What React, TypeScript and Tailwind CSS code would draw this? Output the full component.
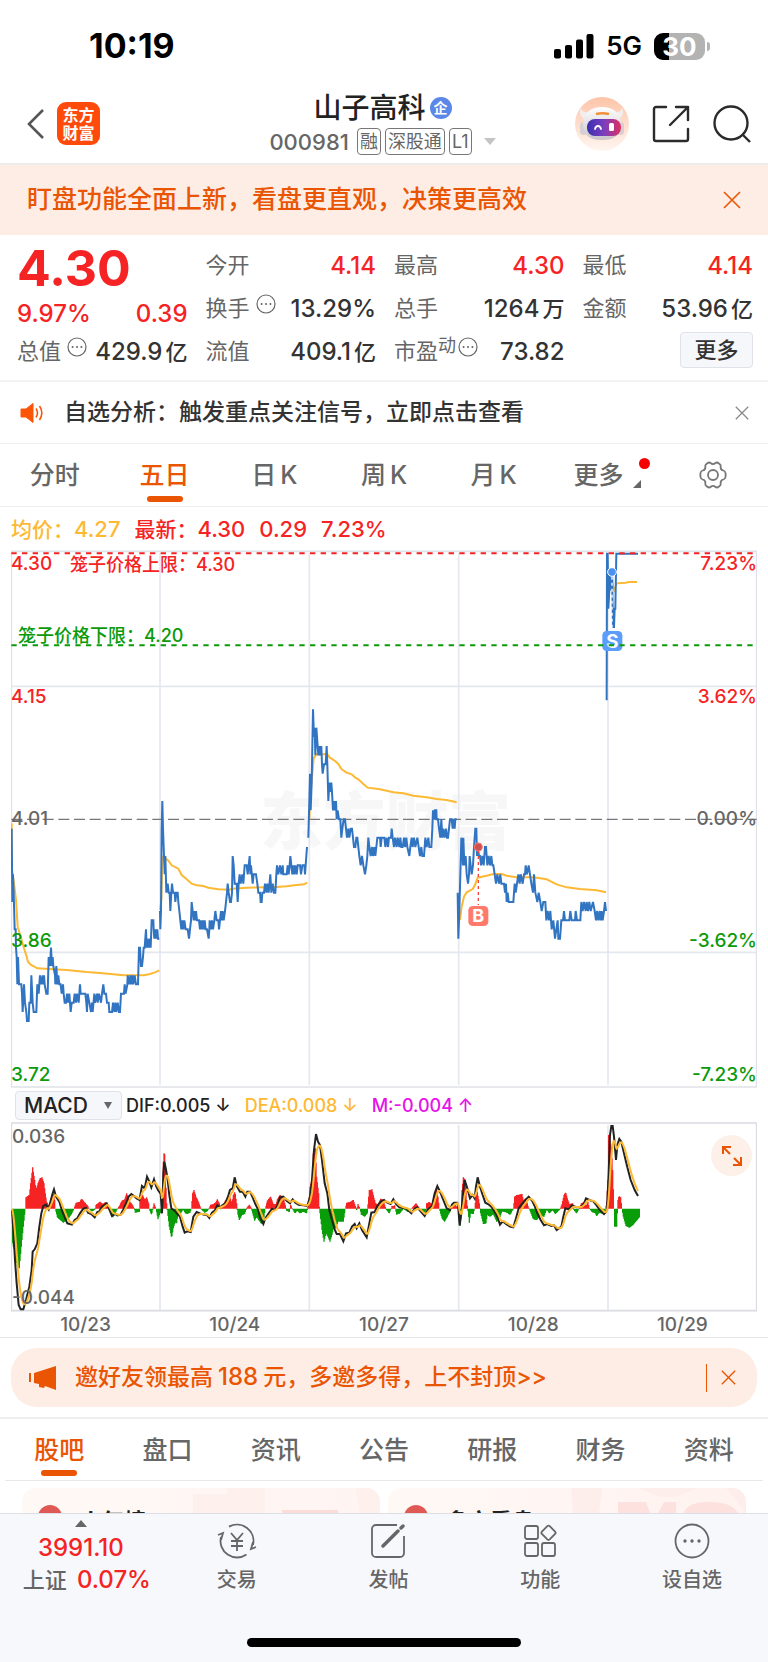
import type { ReactNode } from "react";

// intraday price moves, [x, cents away from the previous close]
const priceDays: [number, number][][] = [
  [[35, -1], [37, -9], [39, -6], [41, -8], [44, -12], [47, -12], [48, -14], [50, -15], [52, -18], [54, -15], [57, -18], [64, -18], [66, -19], [68, -21], [72, -18], [75, -20], [79, -21], [81, -22], [86, -22], [88, -20], [92, -20], [94, -17], [98, -20], [101, -21], [109, -21], [112, -18], [116, -19], [120, -17], [124, -18], [128, -17], [129, -18], [132, -17], [134, -18], [139, -19], [143, -19], [146, -15], [150, -16], [153, -14], [156, -16], [158, -15], [160, -16], [165, -17], [166, -18], [169, -16], [172, -18], [175, -17], [178, -18], [182, -18], [185, -19], [189, -18], [191, -19], [194, -20], [198, -20], [201, -19], [204, -20], [208, -19], [212, -21], [215, -20], [221, -20], [224, -19], [228, -20], [231, -19], [236, -20], [240, -18], [242, -19], [256, -19], [259, -20], [261, -21], [263, -19], [268, -20], [273, -21], [276, -20], [278, -21], [283, -19], [285, -20], [291, -19], [293, -20], [297, -19], [303, -20], [306, -19], [310, -18], [313, -19], [318, -19], [321, -20], [326, -20], [328, -21], [336, -21], [339, -20], [343, -21], [346, -20], [349, -21], [353, -20], [357, -21], [360, -21], [363, -19], [372, -19], [374, -18], [377, -19], [382, -18], [383, -17], [388, -18], [391, -17], [394, -18], [397, -17], [400, -18], [404, -17], [408, -18], [414, -18], [417, -14], [420, -14], [423, -16], [426, -16], [429, -15], [431, -14], [434, -14], [438, -12], [440, -14], [443, -13], [446, -14], [450, -13], [452, -14], [455, -11], [460, -11], [461, -12], [463, -13], [466, -12], [468, -13], [472, -12], [474, -13], [478, -13]],
  [[480, -10], [481, -12], [483, -10], [485, -1], [487, 2], [489, -1], [491, -3], [494, -6], [496, -4], [499, -8], [503, -7], [506, -8], [509, -8], [511, -10], [514, -8], [516, -7], [519, -8], [524, -8], [526, -9], [529, -8], [533, -8], [535, -9], [538, -10], [541, -11], [544, -12], [547, -11], [550, -12], [553, -11], [557, -12], [563, -12], [567, -13], [570, -12], [573, -11], [575, -9], [578, -10], [581, -11], [583, -10], [586, -11], [588, -10], [591, -11], [597, -11], [600, -12], [602, -11], [605, -12], [608, -11], [611, -12], [614, -11], [617, -12], [621, -12], [626, -13], [628, -12], [629, -11], [633, -12], [636, -11], [639, -12], [643, -11], [646, -10], [650, -11], [655, -11], [657, -12], [660, -11], [663, -10], [666, -11], [668, -10], [671, -11], [675, -10], [678, -9], [681, -8], [683, -7], [686, -8], [690, -9], [693, -9], [696, -8], [698, -4], [701, -5], [704, -7], [710, -7], [713, -9], [716, -7], [719, -6], [722, -7], [727, -6], [730, -7], [734, -5], [740, -5], [743, -6], [746, -5], [749, -4], [751, -6], [753, -5], [758, -7], [761, -6], [768, -6], [772, -7], [775, -8], [780, -8], [782, -9], [785, -9], [787, -8], [792, -8], [795, -7], [799, -8], [802, -7], [806, -8], [811, -6], [814, -8], [818, -7], [822, -8], [826, -8], [829, -6], [831, -5], [835, -6], [840, -5], [844, -6], [848, -5], [850, -6], [860, -6], [863, -5], [866, -6], [869, -5], [871, -4], [874, -5], [877, -6], [880, -5], [883, -6], [886, -5], [890, -6], [893, -5], [900, -5], [903, -6], [907, -5], [913, -5], [915, -6], [919, -4], [921, -3]],
  [[925, -2], [928, 2], [930, 5], [932, 1], [935, 4], [937, 8], [939, 12], [942, 9], [944, 10], [946, 7], [949, 10], [953, 8], [955, 7], [958, 8], [961, 7], [964, 8], [966, 6], [968, 5], [972, 6], [977, 6], [980, 8], [982, 6], [985, 2], [988, 4], [991, 3], [994, 4], [996, 3], [999, 1], [1002, 2], [1005, 1], [1008, 2], [1010, 0], [1013, 1], [1017, 0], [1021, 0], [1024, -2], [1027, -1], [1031, 0], [1035, 0], [1038, -1], [1041, -2], [1045, -1], [1048, -2], [1052, -1], [1056, -1], [1059, -2], [1062, -3], [1066, -3], [1069, -2], [1072, -2], [1075, -3], [1078, -4], [1082, -5], [1086, -4], [1090, -5], [1095, -6], [1099, -5], [1102, -4], [1105, -2], [1108, -3], [1112, -4], [1116, -3], [1119, -4], [1123, -3], [1126, -4], [1129, -3], [1132, -2], [1140, -2], [1142, -3], [1145, -2], [1153, -2], [1156, -3], [1160, -2], [1164, -3], [1167, -2], [1173, -2], [1175, -1], [1178, -2], [1182, -3], [1185, -2], [1190, -3], [1193, -2], [1198, -3], [1201, -2], [1204, -3], [1208, -3], [1212, -2], [1215, -3], [1219, -2], [1222, -3], [1228, -4], [1231, -3], [1235, -2], [1238, -3], [1242, -2], [1246, -3], [1252, -2], [1256, -3], [1260, -4], [1264, -3], [1267, -4], [1272, -4], [1276, -2], [1280, -3], [1285, -2], [1288, -3], [1294, -3], [1297, -1], [1299, 1], [1304, 0], [1305, 1], [1309, 1], [1310, 0], [1314, 0], [1317, -1], [1321, -2], [1324, 0], [1327, -2], [1330, -1], [1334, -2], [1338, -1], [1341, -2], [1344, -2], [1347, -1], [1350, 0], [1355, 0], [1358, -1], [1361, 0], [1364, -1], [1366, 0], [1370, 0]],
  [[1373, -8], [1375, -13], [1378, -10], [1381, -6], [1384, -2], [1389, -5], [1390, -2], [1392, -4], [1395, -5], [1397, -4], [1400, -6], [1404, -7], [1407, -6], [1409, -4], [1412, -5], [1415, -6], [1419, -5], [1422, -3], [1426, -1], [1429, -1], [1431, -4], [1433, -3], [1437, -4], [1440, -4], [1443, -5], [1447, -4], [1451, -5], [1455, -3], [1458, -3], [1462, -5], [1466, -4], [1470, -5], [1474, -4], [1477, -5], [1480, -5], [1484, -6], [1488, -7], [1492, -6], [1497, -7], [1501, -6], [1504, -7], [1512, -7], [1515, -8], [1518, -7], [1520, -9], [1523, -8], [1526, -9], [1540, -9], [1544, -7], [1547, -8], [1551, -7], [1555, -6], [1559, -7], [1562, -6], [1568, -7], [1572, -6], [1575, -6], [1577, -5], [1581, -6], [1586, -5], [1590, -6], [1594, -7], [1599, -8], [1602, -6], [1606, -8], [1612, -9], [1616, -8], [1621, -9], [1625, -10], [1630, -9], [1636, -9], [1639, -11], [1643, -10], [1647, -11], [1651, -10], [1655, -12], [1660, -11], [1665, -13], [1669, -12], [1673, -11], [1675, -13], [1680, -13], [1684, -11], [1689, -11], [1692, -10], [1695, -11], [1708, -11], [1711, -10], [1715, -11], [1725, -11], [1727, -10], [1731, -11], [1741, -11], [1744, -9], [1748, -10], [1752, -9], [1757, -10], [1760, -9], [1764, -10], [1768, -9], [1772, -10], [1779, -9], [1784, -10], [1788, -11], [1791, -10], [1795, -11], [1799, -10], [1802, -11], [1805, -10], [1808, -11], [1812, -10], [1815, -9], [1818, -10]],
  [[1820, 13], [1821, 29], [1823, 29], [1825, 23], [1828, 25], [1830, 27], [1833, 25], [1836, 27], [1839, 21], [1842, 21], [1844, 23], [1846, 23], [1849, 29], [1914, 29]],
];

const averageDays = [
  "35,820 36,960 42,1000 48,1050 53,1130 62,1160 72,1195 80,1220 84,1235 92,1244 112,1255 160,1258 200,1260 260,1266 300,1269 340,1273 370,1276 432,1276 450,1272 465,1267 478,1261",
  "480,1080 484,1050 487,920 495,923 505,932 515,946 535,956 545,975 560,988 575,1001 590,1006 610,1008 625,1013 655,1018 685,1019 700,1016 740,1013 830,1011 860,1009 890,1005 912,1003 922,998",
  "928,808 932,720 937,670 941,625 950,612 982,613 990,623 1005,633 1015,642 1025,658 1040,668 1055,673 1065,682 1075,688 1090,702 1103,713 1140,718 1180,727 1210,730 1240,737 1280,742 1310,747 1340,750 1370,757",
  "1380,1110 1385,1070 1392,1040 1400,1027 1418,1017 1425,1005 1433,983 1460,977 1480,972 1505,972 1520,977 1550,982 1600,982 1640,988 1670,1003 1700,1012 1740,1017 1790,1021 1818,1027",
  "1836,80 1839,110 1844,120 1850,100 1877,98 1887,96 1911,96",
];

const histogram =
  "36,386 38,490 45,520 52,560 58,565 64,500 70,440 75,395 76,386 78,352 88,345 92,310 98,262 104,300 108,330 114,310 120,295 126,292 132,310 136,340 140,365 150,384 152,370 158,340 163,345 166,386 172,412 190,428 200,420 206,415 216,400 222,386 228,368 240,365 245,356 252,365 262,376 268,386 275,395 285,388 288,375 300,365 308,372 316,366 324,378 328,390 338,412 345,400 352,388 358,378 366,362 374,358 380,340 388,362 398,376 403,386 406,398 418,396 420,360 424,352 428,345 434,360 440,352 446,370 448,388 455,405 462,370 468,386 474,418 480,400 484,400 488,386 489,260 492,220 495,225 497,300 500,370 503,400 508,440 515,475 520,445 526,425 530,430 534,402 542,400 550,388 556,400 563,402 570,398 574,386 578,340 582,330 588,350 594,362 600,378 604,388 614,398 620,395 626,388 632,374 640,372 648,366 652,358 658,370 662,388 668,380 674,365 684,350 690,352 696,370 700,345 705,335 710,370 713,400 718,420 726,405 734,402 740,384 748,374 754,384 758,400 764,422 770,410 776,420 785,432 790,425 796,386 802,362 812,350 820,372 828,372 832,358 840,345 850,352 856,376 860,392 868,396 872,374 877,386 885,400 892,392 900,400 910,395 920,400 924,380 928,350 930,320 936,300 940,220 946,205 950,290 956,340 958,380 960,400 966,450 972,485 978,460 984,470 990,485 996,465 1002,440 1008,445 1014,425 1030,425 1034,400 1036,386 1040,368 1050,366 1060,360 1066,378 1070,390 1074,372 1080,386 1084,404 1094,410 1102,400 1105,360 1108,330 1116,328 1120,345 1126,368 1134,375 1142,356 1150,360 1158,388 1168,400 1176,378 1184,376 1190,404 1200,400 1210,386 1224,396 1236,384 1248,370 1258,384 1270,402 1278,392 1280,370 1288,366 1298,374 1304,340 1310,325 1314,350 1318,386 1326,415 1334,425 1342,410 1350,395 1354,380 1362,372 1370,380 1376,386 1379,448 1384,400 1386,330 1390,292 1396,300 1400,360 1403,386 1408,428 1412,400 1420,402 1424,386 1428,350 1432,335 1438,370 1442,400 1450,432 1458,430 1462,405 1470,410 1480,402 1490,425 1500,412 1506,394 1520,398 1530,404 1540,388 1544,350 1550,345 1566,342 1570,360 1578,355 1584,378 1590,392 1600,418 1610,420 1620,408 1632,410 1640,388 1648,400 1658,390 1666,402 1680,388 1686,372 1692,345 1697,336 1702,355 1708,372 1718,370 1722,390 1730,400 1736,388 1744,370 1752,366 1758,378 1764,366 1768,384 1776,396 1786,400 1790,408 1798,398 1808,402 1816,388 1820,365 1824,300 1826,165 1834,200 1838,270 1842,386 1844,440 1850,440 1852,400 1854,360 1857,348 1862,352 1866,386 1870,410 1878,438 1888,443 1898,436 1908,424 1918,412";

const dif =
  "36,390 40,450 45,540 50,610 56,675 62,688 70,688 78,660 88,620 95,570 98,515 104,508 112,490 118,440 124,400 130,378 138,374 146,388 152,362 158,340 162,328 168,350 178,365 186,392 194,412 202,430 216,434 224,420 232,415 240,400 250,386 258,384 264,398 274,402 284,412 292,396 298,394 304,382 312,376 320,370 328,388 336,408 346,402 352,406 362,404 370,388 378,370 386,350 394,342 402,348 410,355 418,360 422,340 426,318 434,325 441,290 448,305 454,322 462,298 468,318 474,330 482,342 486,400 488,350 490,280 493,245 498,268 503,300 508,345 514,385 524,392 532,402 540,410 548,440 554,458 562,454 572,456 580,410 590,396 600,400 612,404 620,404 628,414 636,398 644,392 652,376 660,382 668,375 676,370 684,350 690,330 698,325 704,292 710,318 720,335 728,335 736,350 742,335 750,335 758,352 766,372 774,388 780,412 790,432 796,415 806,400 816,386 824,390 832,378 840,352 850,350 860,362 870,370 878,358 886,368 896,374 910,376 922,378 930,350 936,300 942,210 948,162 954,185 960,195 966,240 974,310 982,340 988,390 996,420 1004,448 1010,462 1020,462 1030,484 1038,460 1048,458 1056,440 1064,432 1070,445 1078,430 1086,450 1100,472 1108,430 1114,398 1124,396 1132,378 1142,365 1152,360 1162,368 1172,372 1180,358 1188,372 1198,382 1208,384 1218,385 1234,400 1244,386 1252,382 1260,392 1274,408 1284,388 1296,378 1304,340 1312,318 1320,335 1330,360 1340,385 1350,390 1356,374 1362,368 1372,368 1375,386 1379,436 1384,400 1388,350 1394,300 1402,325 1410,355 1418,345 1424,355 1428,320 1433,292 1440,320 1448,345 1456,368 1464,372 1474,380 1484,395 1492,410 1500,434 1508,424 1518,432 1530,440 1540,442 1548,415 1556,385 1566,372 1578,358 1586,350 1596,362 1604,378 1612,400 1622,420 1632,436 1642,432 1654,438 1662,436 1670,450 1684,440 1690,410 1696,385 1706,388 1716,376 1730,382 1744,380 1752,370 1758,355 1768,360 1780,364 1788,374 1800,390 1812,402 1818,396 1821,386 1826,280 1830,165 1834,138 1838,138 1842,170 1848,240 1852,195 1858,177 1864,185 1872,220 1882,262 1892,300 1904,330 1914,348";

const ZERO = 386;

function resample(source: string, step: number) {
  const pts = source.split(" ").map((p) => p.split(",").map(Number));
  const out: [number, number][] = [];
  let i = 0;
  for (let x = pts[0][0]; x <= pts[pts.length - 1][0]; x += step) {
    while (i < pts.length - 2 && pts[i + 1][0] < x) i++;
    const [x0, y0] = pts[i];
    const [x1, y1] = pts[i + 1];
    out.push([x, y0 + ((y1 - y0) * (x - x0)) / (x1 - x0)]);
  }
  return out;
}

const bars = resample(histogram, 2);
const barPath = (rows: [number, number][]) =>
  rows.map(([x, y]) => `M${x} ${ZERO}V${y.toFixed(0)}`).join("");
const redBars = barPath(bars.filter(([, y]) => y < ZERO));
const greenBars = barPath(bars.filter(([, y]) => y > ZERO));

// signal line trails the fast line
let signal = ZERO;
const dea = resample(dif, 2)
  .map(([x, y]) => {
    signal += (y - signal) * 0.22;
    return `${x},${signal.toFixed(0)}`;
  })
  .join(" ");

const priceLine = (day: [number, number][]) =>
  day.map(([x, c]) => `${x},${(808 - c * 27.5).toFixed(0)}`).join(" ");

function Close({ className }: { className: string }) {
  return (
    <svg viewBox="0 0 18 18" className={className} fill="none" stroke="currentColor" strokeWidth="1.6">
      <path d="M1 1l16 16M17 1L1 17" />
    </svg>
  );
}

function Dots({ className }: { className: string }) {
  return (
    <svg viewBox="0 0 20 20" className={className} fill="none" stroke="currentColor">
      <circle cx="10" cy="10" r="9" strokeWidth="1.2" />
      <path d="M5.6 10h.01M10 10h.01M14.4 10h.01" strokeWidth="2" strokeLinecap="round" />
    </svg>
  );
}

function Robot() {
  return (
    <svg viewBox="0 0 54 54" className="size-[54px]">
      <defs>
        <linearGradient id="halo" x1="0" y1="0" x2="0" y2="1">
          <stop offset="0" stopColor="#fdc4a8" />
          <stop offset="1" stopColor="#fff6f1" />
        </linearGradient>
        <linearGradient id="visor" x1="0" y1="0" x2="1" y2="0">
          <stop offset="0" stopColor="#3a2fae" />
          <stop offset="0.5" stopColor="#7a3fc0" />
          <stop offset="1" stopColor="#e0305c" />
        </linearGradient>
        <linearGradient id="shell" x1="0" y1="0" x2="0" y2="1">
          <stop offset="0" stopColor="#ffffff" />
          <stop offset="1" stopColor="#c9c4c8" />
        </linearGradient>
      </defs>
      <circle cx="27" cy="27" r="27" fill="url(#halo)" />
      <path d="M6 11c1 4 4 5 8 4l-5 7c-4-3-5-7-3-11zM47 11c-1 4-4 5-8 4l5 7c4-3 5-7 3-11z" fill="#f3eeee" />
      <rect x="5" y="25" width="7" height="13" rx="3.5" fill="#d6d0d4" />
      <rect x="42" y="25" width="7" height="13" rx="3.5" fill="#d6d0d4" />
      <path d="M8 27c0-11 8-17 19-17s19 6 19 17c0 10-5 16-19 16S8 37 8 27z" fill="url(#shell)" />
      <path d="M21 17c4-1 9-1 13 0" stroke="#f0903a" strokeWidth="2.4" fill="none" />
      <rect x="12" y="22" width="34" height="17" rx="8" fill="url(#visor)" />
      <path d="M20 32c1-4 5-4 6 0" stroke="#fff" strokeWidth="1.8" fill="none" strokeLinecap="round" />
      <rect x="34" y="26" width="5" height="8" rx="1.5" fill="#fff" />
    </svg>
  );
}

function Stat({
  label,
  value,
  unit,
  red,
  more,
  sup,
}: {
  label: string;
  value: string;
  unit?: string;
  red?: boolean;
  more?: boolean;
  sup?: string;
}) {
  return (
    <div className="flex h-[43px] items-center justify-between whitespace-nowrap">
      <dt className="flex items-center text-[22px] text-[#666]">
        {label}
        {sup && <span className="mb-3 text-lg leading-none">{sup}</span>}
        {more && <Dots className={sup ? "mb-[10px] ml-[2px] size-5" : "mb-[10px] ml-[6px] size-5"} />}
      </dt>
      <dd className={red ? "text-2xl font-medium text-[#f52323]" : "text-2xl font-medium text-[#333]"}>
        {value}
        {unit && <span className="ml-[3px] text-[22px]">{unit}</span>}
      </dd>
    </div>
  );
}

const chartTabs = [
  { name: "分时" },
  { name: "五日" },
  { name: "日", suffix: "K" },
  { name: "周", suffix: "K" },
  { name: "月", suffix: "K" },
];
const infoTabs = ["股吧", "盘口", "资讯", "公告", "研报", "财务", "资料"];

function Tab({ name, suffix, active }: { name: string; suffix?: string; active: boolean }) {
  return (
    <button
      className={
        active
          ? "relative flex items-center justify-center pt-[2px] text-[25px] font-medium text-[#ea5504]"
          : "relative flex items-center justify-center pt-[2px] text-[25px] font-medium text-[#666]"
      }
    >
      {name}
      {suffix && <span className="ml-1">{suffix}</span>}
      {active && <span className="absolute bottom-1 h-[6px] w-9 rounded-full bg-[#ea5504]" />}
    </button>
  );
}

function PriceChart() {
  return (
    <div className="relative mx-[11px] h-[538px] text-[19px] leading-5 font-medium">
      <svg viewBox="33 0 2238 1614" preserveAspectRatio="none" className="block size-full">
        <text x="1157" y="882" textAnchor="middle" fontSize="188" fontWeight="900" fill="#f7f7f8">
          东方财富
        </text>
        <g fill="none" stroke="#e4e7ef" strokeWidth="5">
          <path d="M34 4H2270V1611H34z" stroke="#dfe2e8" />
          <path d="M480 10V1604M928 10V1604M1376 10V1604M1824 10V1604M34 409H2270M34 1207H2270" />
        </g>
        <path d="M34 808H2270" stroke="#777" strokeWidth="4" strokeDasharray="33 14" />
        {averageDays.map((d) => (
          <polyline key={d} points={d} fill="none" stroke="#fdb933" strokeWidth="6" />
        ))}
        {priceDays.map((d, i) => (
          <polyline key={i} points={priceLine(d)} fill="none" stroke="#3174c2" strokeWidth="6" />
        ))}
        <path d="M34 10H2270" stroke="#f52323" strokeWidth="6" strokeDasharray="16 16" />
        <path d="M1435 900V1065" stroke="#f5433c" strokeWidth="4" strokeDasharray="9 9" />
        <circle cx="1435" cy="891" r="12" fill="#cf5050" stroke="#ff7466" strokeWidth="3" />
        <rect x="1405" y="1068" width="60" height="60" rx="13" fill="#ff7a6c" />
        <text x="1435" y="1117" textAnchor="middle" fontSize="54" fontWeight="700" fill="#fff">
          B
        </text>
        <path d="M1836 80V245" stroke="#fff" strokeWidth="4" strokeDasharray="9 9" />
        <circle cx="1836" cy="66" r="13" fill="#4d92f0" stroke="#fff" strokeWidth="3" />
        <rect x="1807" y="243" width="60" height="60" rx="13" fill="#5a9dfb" />
        <text x="1837" y="293" textAnchor="middle" fontSize="56" fontWeight="700" fill="#fff">
          S
        </text>
        <path d="M34 286H2270" stroke="#0b9a0b" strokeWidth="6" strokeDasharray="16 16" />
      </svg>
      <span className="absolute top-1 left-0 text-[#f52323]">4.30</span>
      <span className="absolute top-[5px] left-[59px] text-lg leading-5 text-[#f52323]">笼子价格上限：4.30</span>
      <span className="absolute top-[76px] left-[7px] text-lg leading-5 text-[#0b9a0b]">笼子价格下限：4.20</span>
      <span className="absolute top-[137px] left-0 text-[#f52323]">4.15</span>
      <span className="absolute top-[259px] left-0 text-[#666]">4.01</span>
      <span className="absolute top-[381px] left-0 text-[#0b9a0b]">3.86</span>
      <span className="absolute top-[515px] left-0 text-[#0b9a0b]">3.72</span>
      <span className="absolute top-1 right-0 text-[#f52323]">7.23%</span>
      <span className="absolute top-[137px] right-0 text-[#f52323]">3.62%</span>
      <span className="absolute top-[259px] right-0 text-[#666]">0.00%</span>
      <span className="absolute top-[381px] right-0 text-[#0b9a0b]">-3.62%</span>
      <span className="absolute top-[515px] right-0 text-[#0b9a0b]">-7.23%</span>
    </div>
  );
}

function MacdChart() {
  return (
    <div className="relative mx-[11px] h-[190px] text-[19px] leading-5 font-medium text-[#666]">
      <svg viewBox="33 126 2238 570" preserveAspectRatio="none" className="block size-full" fill="none">
        <path d="M34 129H2270V692H34z" stroke="#dadce2" strokeWidth="5" />
        <path d="M480 135V690M928 135V690M1376 135V690M1824 135V690" stroke="#e4e7ef" strokeWidth="5" />
        <path d={redBars} stroke="#f52323" strokeWidth="4" />
        <path d={greenBars} stroke="#0a9d0a" strokeWidth="4" />
        <polyline points={dif} stroke="#222" strokeWidth="6" />
        <polyline points={dea} stroke="#fdb933" strokeWidth="6" />
      </svg>
      <span className="absolute top-[5px] left-px">0.036</span>
      <span className="absolute bottom-1 left-px">-0.044</span>
      <button aria-label="全屏" className="absolute top-[13px] right-[5px] flex size-[41px] items-center justify-center rounded-full bg-[#fdf0e9] text-[#ea5504]">
        <svg viewBox="0 0 22 22" className="size-[22px]" fill="none" stroke="currentColor" strokeWidth="2">
          <path d="M2 9V2h8M2 2l7 7M20 12v8h-8M20 20l-7-7" />
        </svg>
      </button>
    </div>
  );
}

function NavItem({ name, children }: { name: string; children: ReactNode }) {
  return (
    <a href="#" className="flex flex-col items-center text-xl font-medium text-[#666]">
      <svg viewBox="0 0 40 36" className="mt-[9px] h-9 w-10" fill="none" stroke="currentColor" strokeWidth="1.8">
        {children}
      </svg>
      <span className="mt-[7px] leading-7">{name}</span>
    </a>
  );
}

export default function App() {
  return (
    <div className="w-full overflow-hidden bg-white font-['Inter','Noto_Sans_CJK_SC',sans-serif] text-[#333]">
      <div className="flex h-[92px] items-center justify-between pr-[58px] pl-[89px] text-black">
        <span className="text-[34px] leading-10 font-bold">10:19</span>
        <div className="flex items-center">
          <svg viewBox="0 0 40 25" className="h-[25px] w-10">
            <rect x="0" y="15" width="7" height="9.5" rx="2" />
            <rect x="11" y="11" width="7" height="13.5" rx="2" />
            <rect x="22" y="5.5" width="7" height="19" rx="2" />
            <rect x="32.5" y="0" width="7" height="24.5" rx="2" />
          </svg>
          <span className="ml-3 text-[26px] leading-8 font-semibold">5G</span>
          <div className="ml-3 flex h-[27px] w-[51px] items-center justify-center rounded-[9px] bg-[linear-gradient(to_right,#000_15px,#b3b3b3_15px)] text-[26px] leading-[27px] font-bold text-white">
            30
          </div>
          <span className="ml-[2px] h-[9px] w-[3px] rounded-r-full bg-[#b3b3b3]" />
        </div>
      </div>

      <header className="grid h-[73px] grid-cols-3 items-center border-b-2 border-[#ececec] pr-[17px] pb-2 pl-[26px]">
        <div className="flex items-center gap-[13px]">
          <button aria-label="返回">
            <svg viewBox="0 0 18 30" className="h-[30px] w-[18px]" fill="none" stroke="#555" strokeWidth="2.6">
              <path d="M17 1L3 15l14 14" />
            </svg>
          </button>
          <a href="#" className="flex size-[43px] flex-col items-center justify-center rounded-[9px] bg-[#fe4a0a] text-base leading-[18px] font-bold text-white">
            <span>东方</span>
            <span>财富</span>
          </a>
        </div>
        <div className="flex flex-col items-center gap-1 pr-3 whitespace-nowrap">
          <h1 className="flex items-center gap-1 text-[28px] leading-8 font-medium text-[#222]">
            山子高科
            <span className="flex size-[22px] items-center justify-center rounded-full bg-[#5b87e8] text-sm leading-none font-bold text-white">
              企
            </span>
          </h1>
          <div className="flex items-center gap-1 text-lg leading-none text-[#666]">
            <span className="mr-1 text-[22px] font-medium">000981</span>
            <span className="flex h-[27px] items-center rounded border border-[#777] px-[2px]">融</span>
            <span className="flex h-[27px] items-center rounded border border-[#777] px-[2px]">深股通</span>
            <span className="flex h-[27px] items-center rounded border border-[#777] px-[2px]">L1</span>
            <svg viewBox="0 0 12 7" className="ml-2 h-[7px] w-3" fill="#c4c4c4">
              <path d="M0 0h12L6 7z" />
            </svg>
          </div>
        </div>
        <div className="flex items-center justify-end gap-[23px] text-[#2b2b2b]">
          <button aria-label="智能助手">
            <Robot />
          </button>
          <button aria-label="分享">
            <svg viewBox="0 0 38 38" className="size-[38px]" fill="none" stroke="currentColor" strokeWidth="2.4" strokeLinecap="round" strokeLinejoin="round">
              <path d="M14 2H4a2 2 0 0 0-2 2v30a2 2 0 0 0 2 2h30a2 2 0 0 0 2-2V24" />
              <path d="M24 2h12v13M36 2L18 20" />
            </svg>
          </button>
          <button aria-label="搜索">
            <svg viewBox="0 0 38 38" className="size-[38px]" fill="none" stroke="currentColor" strokeWidth="2.4">
              <circle cx="18" cy="18" r="16.5" />
              <path d="M29.5 29.5L37 37" />
            </svg>
          </button>
        </div>
      </header>

      <div className="flex h-[70px] items-center justify-between bg-[#fdede4] pr-[27px] pl-[27px] text-[25px] font-medium text-[#ea5504]">
        <p>盯盘功能全面上新，看盘更直观，决策更高效</p>
        <button aria-label="关闭">
          <Close className="size-[18px]" />
        </button>
      </div>

      <dl className="grid h-[147px] grid-cols-4 gap-x-[18px] border-b-2 border-[#f3f3f3] pt-[9px] pr-[15px] pl-[17px]">
        <div>
          <div className="h-[86px] text-[#f52323]">
            <p className="text-[50px] leading-[48px] font-bold">4.30</p>
            <div className="flex justify-between text-2xl leading-11 font-medium">
              <span>9.97%</span>
              <span>0.39</span>
            </div>
          </div>
          <Stat label="总值" value="429.9" unit="亿" more />
        </div>
        <div>
          <Stat label="今开" value="4.14" red />
          <Stat label="换手" value="13.29%" more />
          <Stat label="流值" value="409.1" unit="亿" />
        </div>
        <div>
          <Stat label="最高" value="4.30" red />
          <Stat label="总手" value="1264" unit="万" />
          <Stat label="市盈" value="73.82" sup="动" more />
        </div>
        <div>
          <Stat label="最低" value="4.14" red />
          <Stat label="金额" value="53.96" unit="亿" />
          <div className="flex h-[43px] items-center justify-end pb-1">
            <button className="h-9 w-[73px] rounded border border-[#dfe2e8] bg-[#f6f7fa] text-[22px] leading-none font-medium">
              更多
            </button>
          </div>
        </div>
      </dl>

      <div className="flex h-[62px] items-center border-b border-[#eee] pr-[19px] pl-5 text-[23px] font-medium">
        <svg viewBox="0 0 24 20" className="h-5 w-6 text-[#fb5607]">
          <path d="M1 6h5l7-5.500v19L6 14H1z" fill="currentColor" stroke="currentColor" strokeLinejoin="round" />
          <path d="M16 5.500c2 3 2 6 0 9M19.500 3c3 4.500 3 9.500 0 14" fill="none" stroke="currentColor" strokeWidth="1.6" />
        </svg>
        <p className="ml-5 flex-1">自选分析：触发重点关注信号，立即点击查看</p>
        <button aria-label="关闭" className="text-[#888]">
          <Close className="size-[14px]" />
        </button>
      </div>

      <div className="grid h-[63px] grid-cols-7 border-b border-[#eee]">
        {chartTabs.map((t) => (
          <Tab key={t.name} name={t.name} suffix={t.suffix} active={t.name === "五日"} />
        ))}
        <button className="relative flex items-center justify-center pt-[2px] pr-[10px] text-[25px] font-medium text-[#666]">
          更多
          <span className="absolute top-[14px] right-2 size-[11px] rounded-full bg-[#f90000]" />
          <svg viewBox="0 0 8 8" className="absolute right-[17px] bottom-[18px] size-2" fill="#666">
            <path d="M8 0v8H0z" />
          </svg>
        </button>
        <button aria-label="设置" className="flex items-center justify-center text-[#777]">
          <svg viewBox="0 0 30 28" className="h-7 w-[30px]" fill="none" stroke="currentColor" strokeWidth="1.8" strokeLinejoin="round">
            <path d="M9 2.500c1.500-1.200 2.500-1.500 3.500-.5 1.500 1.300 3.500 1.300 5 0 1-1 2-.7 3.500.5 1.500 1 2 1.500 1.700 3-.3 2 .7 3.500 2.600 4 1.500.4 2 1 2.200 2.500.2 1.500.2 2.500 0 4-.2 1.500-.7 2.100-2.200 2.500-1.900.5-2.900 2-2.600 4 .3 1.500-.2 2-1.700 3-1.500 1.200-2.500 1.500-3.500.5-1.500-1.300-3.500-1.300-5 0-1 1-2 .7-3.500-.5-1.500-1-2-1.500-1.700-3 .3-2-.7-3.500-2.600-4-1.500-.4-2-1-2.200-2.500-.2-1.500-.2-2.500 0-4 .2-1.500.7-2.100 2.200-2.500 1.900-.5 2.900-2 2.600-4-.3-1.500.2-2 1.700-3z" />
            <circle cx="15" cy="14" r="5" />
          </svg>
        </button>
      </div>

      <div className="flex h-[43px] items-center gap-[14px] pt-px pl-[11px] text-[22px] font-medium text-[#f52323]">
        <span className="text-[#fdb933]">
          <span className="text-[21px]">均价：</span>4.27
        </span>
        <span>
          <span className="text-[21px]">最新：</span>4.30
        </span>
        <span>0.29</span>
        <span>7.23%</span>
      </div>

      <PriceChart />

      <div className="flex h-[34px] items-center pt-px pl-[15px] text-lg leading-none font-medium whitespace-nowrap">
        <div className="relative mr-1">
          <select aria-label="指标" className="h-[29px] w-[107px] appearance-none rounded border border-[#dfe2e8] bg-[#f6f7fa] pl-2 text-[21px] leading-none font-medium text-[#222]">
            <option>MACD</option>
          </select>
          <svg viewBox="0 0 8 7" className="pointer-events-none absolute top-[11px] right-[10px] h-[7px] w-2" fill="#666">
            <path d="M0 0h8L4 7z" />
          </svg>
        </div>
        <span className="mr-[14px] text-[#222]">DIF:0.005 ↓</span>
        <span className="mr-[14px] text-[#fdb933]">DEA:0.008 ↓</span>
        <span className="text-[#e612e6]">M:-0.004 ↑</span>
      </div>

      <MacdChart />

      <div className="border-b border-[#e6e6e6]">
        <div className="mx-[11px] grid h-[25px] grid-cols-5 items-center text-center text-[19px] leading-none font-medium text-[#666]">
          <span>10/23</span>
          <span>10/24</span>
          <span>10/27</span>
          <span>10/28</span>
          <span>10/29</span>
        </div>
      </div>

      <div className="border-b-2 border-[#eee] px-[11px] py-[10px]">
        <div className="flex h-[59px] items-center rounded-[26px] bg-[#fdede4] pr-[21px] pl-[18px] text-[23px] font-medium text-[#ea5504]">
          <svg viewBox="0 0 28 26" className="h-[26px] w-7" fill="currentColor">
            <path d="M0 8h2v9H0zM5 8L27 1v24l-11-4-1 2-5-1v-3l-5-1z" />
          </svg>
          <p className="ml-[18px] flex-1">
            邀好友领最高<span className="mx-[5px] text-2xl">188</span>元，多邀多得，上不封顶&gt;&gt;
          </p>
          <span className="mr-[14px] h-7 w-px bg-[#ea5504]" />
          <button aria-label="关闭">
            <Close className="size-[15px]" />
          </button>
        </div>
      </div>

      <div className="mx-[5px] grid h-[62px] grid-cols-7 border-b border-[#e8e8e8]">
        {infoTabs.map((t) => (
          <Tab key={t} name={t} active={t === "股吧"} />
        ))}
      </div>

      <div className="grid h-8 grid-cols-2 gap-2 overflow-hidden px-[22px] pt-[7px] text-[22px] leading-8 font-bold text-[#222]">
        <div className="relative flex h-16 overflow-hidden rounded-[14px] bg-[linear-gradient(to_right,#fff9f6,#fff4f1)] pt-[17px] pl-4">
          <svg viewBox="0 0 358 25" className="absolute top-0 left-0 h-[25px] w-full" fill="#fdf0ed">
            <path d="M171 6h34V0h38v25h-72zM333 0h25v25h-20z" />
            <path d="M260 22h56v3h-56z" fill="#fbdcd9" />
          </svg>
          <span className="mr-[18px] size-6 rounded-full bg-[#e05a55]" />
          <span className="relative">人气榜</span>
        </div>
        <div className="relative flex h-16 overflow-hidden rounded-[14px] bg-[linear-gradient(to_right,#fff9f6,#fff2ef)] pt-[17px] pl-4">
          <svg viewBox="0 0 358 25" className="absolute top-0 left-0 h-[25px] w-full" fill="#fdeeeb">
            <path d="M183 0h31l-3 25h-26zM250 0h60l-22 9h-16zM338 0h20v25z" />
            <path d="M230 14h28l4 11h-32zM276 14h12v11h-18zM296 25c2-8 12-11 26-11 16 0 24 4 28 11z" fill="#fce1de" />
          </svg>
          <span className="mr-[18px] size-6 rounded-full bg-[#e05a55]" />
          <span className="relative">多空看盘</span>
        </div>
      </div>

      <div className="relative h-[149px] border-t border-[#dcdfe5] bg-[#f7f8fb] pl-[9px]">
        <nav className="grid grid-cols-5">
          <a href="#" className="flex flex-col items-center pr-2 text-2xl font-medium whitespace-nowrap text-[#f52323]">
            <svg viewBox="0 0 12 7" className="mt-[6px] h-[7px] w-3" fill="#666">
              <path d="M6 0l6 7H0z" />
            </svg>
            <span className="mt-[5px] leading-8">3991.10</span>
            <span className="pl-3 leading-8">
              <span className="mr-[10px] text-[22px] text-[#666]">上证</span>0.07%
            </span>
          </a>
          <NavItem name="交易">
            <path d="M12 3.600A16.500 16.500 0 0 1 36 22M4 14A16.500 16.500 0 0 0 29.500 31.500" />
            <path d="M1 12l5-2-2 7M39 24l-5 2 2-7" />
            <path d="M14 10l6 7 6-7M20 17v11M14 18h12M14 23h12" />
          </NavItem>
          <NavItem name="发帖">
            <path d="M29 2H8a4 4 0 0 0-4 4v24a4 4 0 0 0 4 4h24a4 4 0 0 0 4-4V13" />
            <path d="M15 23L30 8M33 5l2-2" strokeWidth="3.4" strokeLinecap="round" />
          </NavItem>
          <NavItem name="功能">
            <rect x="5" y="3" width="13" height="13" rx="2" />
            <rect x="5" y="20" width="13" height="13" rx="2" />
            <rect x="22" y="20" width="13" height="13" rx="2" />
            <path d="M27.300 3.200a1.800 1.800 0 0 1 2.400 0l5.400 5.400a1.800 1.800 0 0 1 0 2.400l-5.400 5.400a1.800 1.800 0 0 1-2.400 0l-5.400-5.400a1.800 1.800 0 0 1 0-2.400z" />
          </NavItem>
          <NavItem name="设自选">
            <circle cx="20" cy="18" r="16.500" />
            <path d="M13 18h.01M20 18h.01M27 18h.01" strokeWidth="3.4" strokeLinecap="round" />
          </NavItem>
        </nav>
        <span className="absolute bottom-[15px] left-1/2 h-[9px] w-[274px] -translate-x-1/2 rounded-full bg-black" />
      </div>
    </div>
  );
}
